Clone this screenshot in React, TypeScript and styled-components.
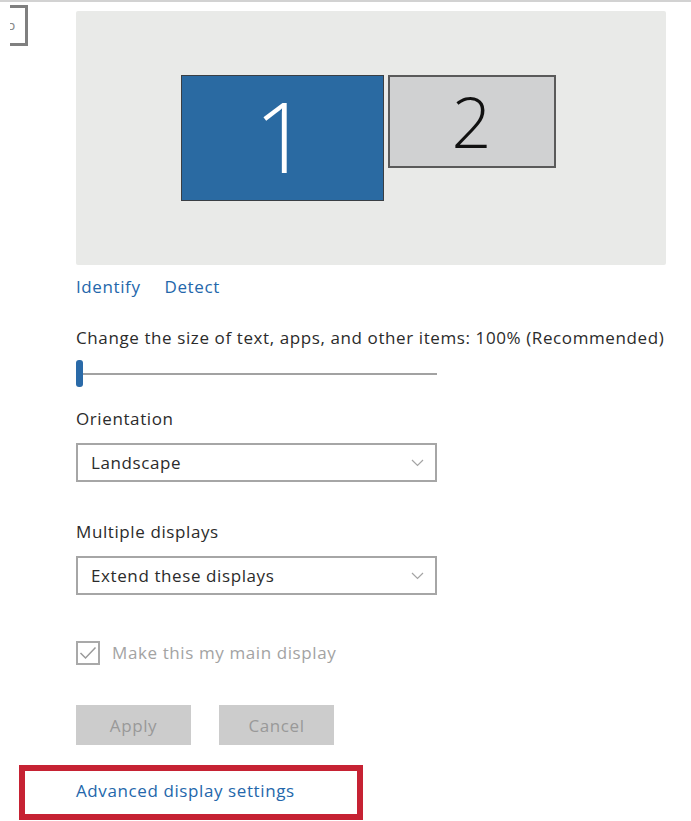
import React from "react";
import styled, { createGlobalStyle } from "styled-components";

const GlobalStyle = createGlobalStyle`
  html, body {
    margin: 0;
    padding: 0;
    background: #ffffff;
  }
  body {
    font-family: "Open Sans", "Noto Sans", "Liberation Sans", sans-serif;
    color: #2b2b2b;
    -webkit-font-smoothing: antialiased;
  }
`;

const monitors = [
  { id: 1, active: true },
  { id: 2, active: false },
];

export default function App(): JSX.Element {
  return (
    <>
      <GlobalStyle />
      <Page>
        <Gutter>
          <CutBox>
            <CutGlyph>ɔ</CutGlyph>
          </CutBox>
        </Gutter>

        <Main>
          <Preview>
            {monitors.map((m) => (
              <Monitor key={m.id} $active={m.active}>
                <MonitorNumber $active={m.active}>{m.id}</MonitorNumber>
              </Monitor>
            ))}
          </Preview>

          <LinkRow>
            <Link>Identify</Link>
            <Link>Detect</Link>
          </LinkRow>

          <Label $top={27}>Change the size of text, apps, and other items: 100% (Recommended)</Label>
          <Slider>
            <Thumb />
            <Track />
          </Slider>

          <Label $top={20}>Orientation</Label>
          <Dropdown>
            <span>Landscape</span>
            <Chevron />
          </Dropdown>

          <Label $top={38}>Multiple displays</Label>
          <Dropdown>
            <span>Extend these displays</span>
            <Chevron />
          </Dropdown>

          <CheckRow>
            <CheckBox>
              <svg width="18" height="14" viewBox="0 0 18 14">
                <polyline points="1.5,7 6.5,12 16.5,1.5" fill="none" stroke="#9a9a9a" strokeWidth="1.5" />
              </svg>
            </CheckBox>
            <CheckLabel>Make this my main display</CheckLabel>
          </CheckRow>

          <ButtonRow>
            <Button>Apply</Button>
            <Button>Cancel</Button>
          </ButtonRow>

          <Highlight>
            <Link>Advanced display settings</Link>
          </Highlight>
        </Main>
      </Page>
    </>
  );
}

function Chevron(): JSX.Element {
  return (
    <ChevronSvg width="13" height="8" viewBox="0 0 13 8">
      <polyline points="1,1 6.5,6.5 12,1" fill="none" stroke="#a4a4a4" strokeWidth="1.2" />
    </ChevronSvg>
  );
}

const Page = styled.div`
  display: flex;
  min-height: 821px;
  box-sizing: border-box;
  border-top: 2px solid #d2d2d2;
  overflow: hidden;
`;

const Gutter = styled.div`
  width: 76px;
  flex-shrink: 0;
`;

const CutBox = styled.div`
  margin: 3px 0 0 10px;
  width: 15px;
  height: 35px;
  border: 3px solid #808080;
  border-left: none;
  display: flex;
  align-items: center;
  overflow: hidden;
`;

const CutGlyph = styled.span`
  font-size: 13px;
  line-height: 1;
  color: #8a8a8a;
  margin-left: -1px;
`;

const Main = styled.div`
  display: flex;
  flex-direction: column;
  align-items: flex-start;
  width: 600px;
`;

const Preview = styled.div`
  margin-top: 9px;
  width: 590px;
  height: 254px;
  background: #e9eae8;
  border-radius: 2px;
  display: flex;
  justify-content: center;
  align-items: flex-start;
  gap: 4px;
  padding: 64px 6px 0 0;
  box-sizing: border-box;
`;

const Monitor = styled.div<{ $active: boolean }>`
  box-sizing: border-box;
  width: ${({ $active }) => ($active ? "203px" : "168px")};
  height: ${({ $active }) => ($active ? "126px" : "93px")};
  background: ${({ $active }) => ($active ? "#2a6aa2" : "#d0d1d2")};
  border: ${({ $active }) => ($active ? "1px solid #3a3f44" : "2px solid #5a5a5a")};
  display: flex;
  align-items: center;
  justify-content: center;
`;

const MonitorNumber = styled.span<{ $active: boolean }>`
  font-family: "Open Sans", "Noto Sans", sans-serif;
  font-weight: 300;
  font-size: ${({ $active }) => ($active ? "98px" : "70px")};
  line-height: 1;
  color: ${({ $active }) => ($active ? "#ffffff" : "#111111")};
  margin-top: ${({ $active }) => ($active ? "-6px" : "-2px")};
`;

const LinkRow = styled.div`
  margin-top: 10px;
  display: flex;
  gap: 24px;
`;

const Link = styled.span`
  font-size: 17px;
  line-height: 24px;
  color: #2467ab;
  letter-spacing: 0.6px;
`;

const Label = styled.div<{ $top: number }>`
  margin-top: ${({ $top }) => $top}px;
  font-size: 17px;
  line-height: 24px;
  color: #2b2b2b;
  white-space: nowrap;
  letter-spacing: 0.6px;
`;

const Slider = styled.div`
  margin-top: 10px;
  display: flex;
  align-items: center;
  height: 27px;
`;

const Thumb = styled.div`
  width: 7px;
  height: 27px;
  border-radius: 3px;
  background: #2a6aa8;
`;

const Track = styled.div`
  width: 354px;
  height: 2px;
  background: #a2a2a2;
`;

const Dropdown = styled.div`
  margin-top: 12px;
  box-sizing: border-box;
  width: 361px;
  height: 39px;
  border: 2px solid #a6a6a6;
  display: flex;
  align-items: center;
  justify-content: space-between;
  padding: 0 11px 0 13px;
  font-size: 17px;
  color: #2b2b2b;
  letter-spacing: 0.6px;
`;

const ChevronSvg = styled.svg`
  display: block;
`;

const CheckRow = styled.div`
  margin-top: 46px;
  display: flex;
  align-items: center;
  gap: 12px;
`;

const CheckBox = styled.div`
  box-sizing: border-box;
  width: 24px;
  height: 24px;
  border: 2px solid #a9a9a9;
  display: flex;
  align-items: center;
  justify-content: center;
`;

const CheckLabel = styled.span`
  font-size: 17px;
  line-height: 24px;
  color: #a3a3a3;
  letter-spacing: 0.6px;
`;

const ButtonRow = styled.div`
  margin-top: 40px;
  display: flex;
  gap: 28px;
`;

const Button = styled.div`
  width: 115px;
  height: 40px;
  background: #cccccc;
  color: #999999;
  font-size: 17px;
  letter-spacing: 0.6px;
  display: flex;
  align-items: center;
  justify-content: center;
`;

const Highlight = styled.div`
  margin: 20px 0 0 -57px;
  box-sizing: border-box;
  width: 344px;
  height: 55px;
  border: 6px solid #c62233;
  padding: 8px 0 0 51px;
`;
